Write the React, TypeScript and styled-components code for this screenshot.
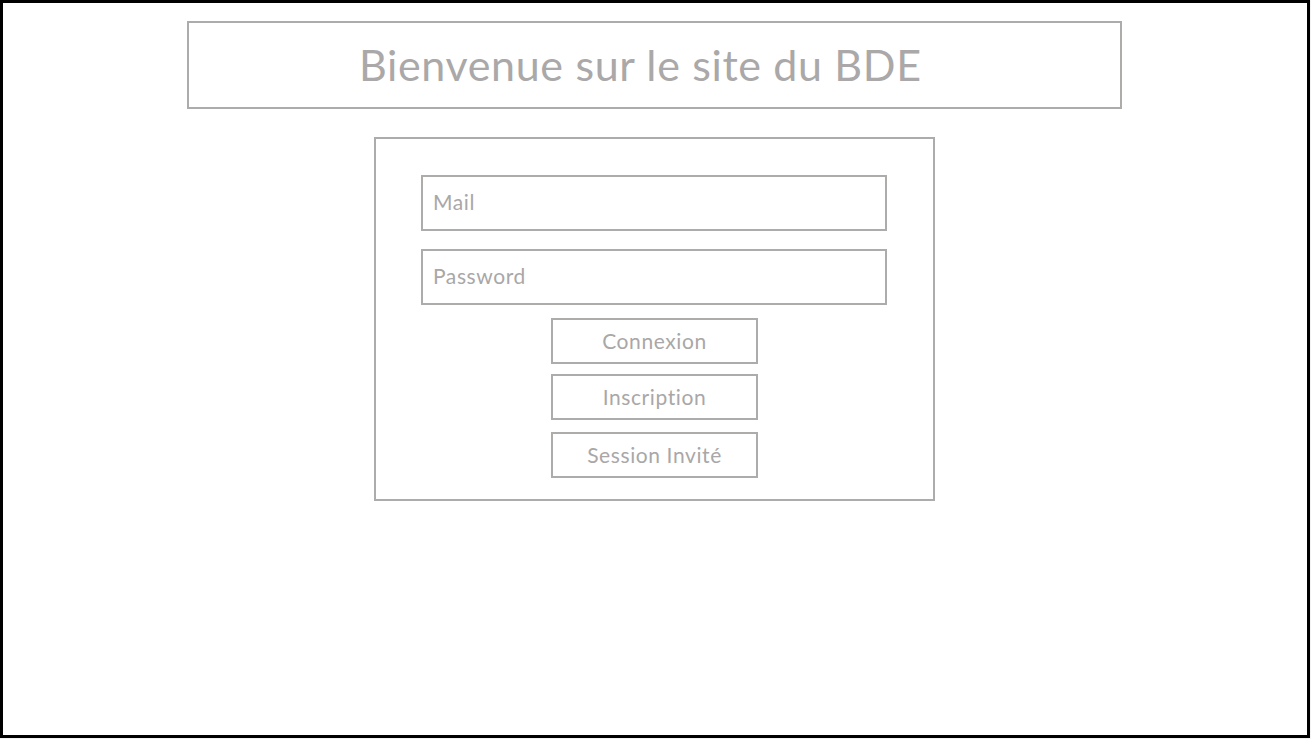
import React from "react";
import styled, { createGlobalStyle } from "styled-components";

const Global = createGlobalStyle`
  html, body {
    margin: 0;
    padding: 0;
    background: #f2f2f2;
  }
  body {
    font-family: "Lato", "Open Sans", sans-serif;
  }
  * { box-sizing: border-box; }
`;

const Frame = styled.div`
  width: 1310px;
  height: 738px;
  background: #ffffff;
  border: 3px solid #000000;
  display: flex;
  flex-direction: column;
  align-items: flex-start;
  padding: 18px 0 0 184px;
`;

const Header = styled.header`
  width: 935px;
  height: 88px;
  border: 2px solid #aeabab;
  display: flex;
  align-items: center;
  justify-content: flex-start;
  padding-left: 170px;
`;

const Title = styled.h1`
  margin: 0;
  font-family: "Lato", "Open Sans", sans-serif;
  font-weight: 400;
  font-size: 43px;
  color: #aaa8a8;
  letter-spacing: 0.65px;
  padding-bottom: 2px;
  white-space: nowrap;
`;

const LoginBox = styled.form`
  width: 561px;
  height: 364px;
  margin: 28px 0 0 187px;
  border: 2px solid #aeabab;
  padding: 36px 0 0 45px;
  display: flex;
  flex-direction: column;
  align-items: flex-start;
`;

const Field = styled.input<{ $gap?: number }>`
  width: 466px;
  height: 56px;
  border: 2px solid #aeabab;
  border-radius: 0;
  outline: none;
  padding: 0 10px 3px;
  margin-top: ${(p) => p.$gap ?? 0}px;
  font-family: "Lato", "Open Sans", sans-serif;
  font-size: 21px;
  letter-spacing: 0.6px;
  color: #888;
  background: #fff;
  &::placeholder {
    color: #a9a7a7;
  }
`;

const Button = styled.button<{ $gap: number }>`
  width: 207px;
  height: 46px;
  margin: ${(p) => p.$gap}px 0 0 130px;
  border: 2px solid #aeabab;
  border-radius: 0;
  background: #ffffff;
  font-family: "Lato", "Open Sans", sans-serif;
  font-size: 21px;
  letter-spacing: 0.6px;
  color: #a9a7a7;
  padding: 0 0 1px;
  cursor: pointer;
`;

export default function App() {
  return (
    <>
      <Global />
      <Frame>
        <Header>
          <Title>Bienvenue sur le site du BDE</Title>
        </Header>
        <LoginBox onSubmit={(e) => e.preventDefault()}>
          <Field type="email" placeholder="Mail" />
          <Field type="password" placeholder="Password" $gap={18} />
          <Button type="submit" $gap={13}>Connexion</Button>
          <Button type="button" $gap={10}>Inscription</Button>
          <Button type="button" $gap={12}>Session Invité</Button>
        </LoginBox>
      </Frame>
    </>
  );
}
